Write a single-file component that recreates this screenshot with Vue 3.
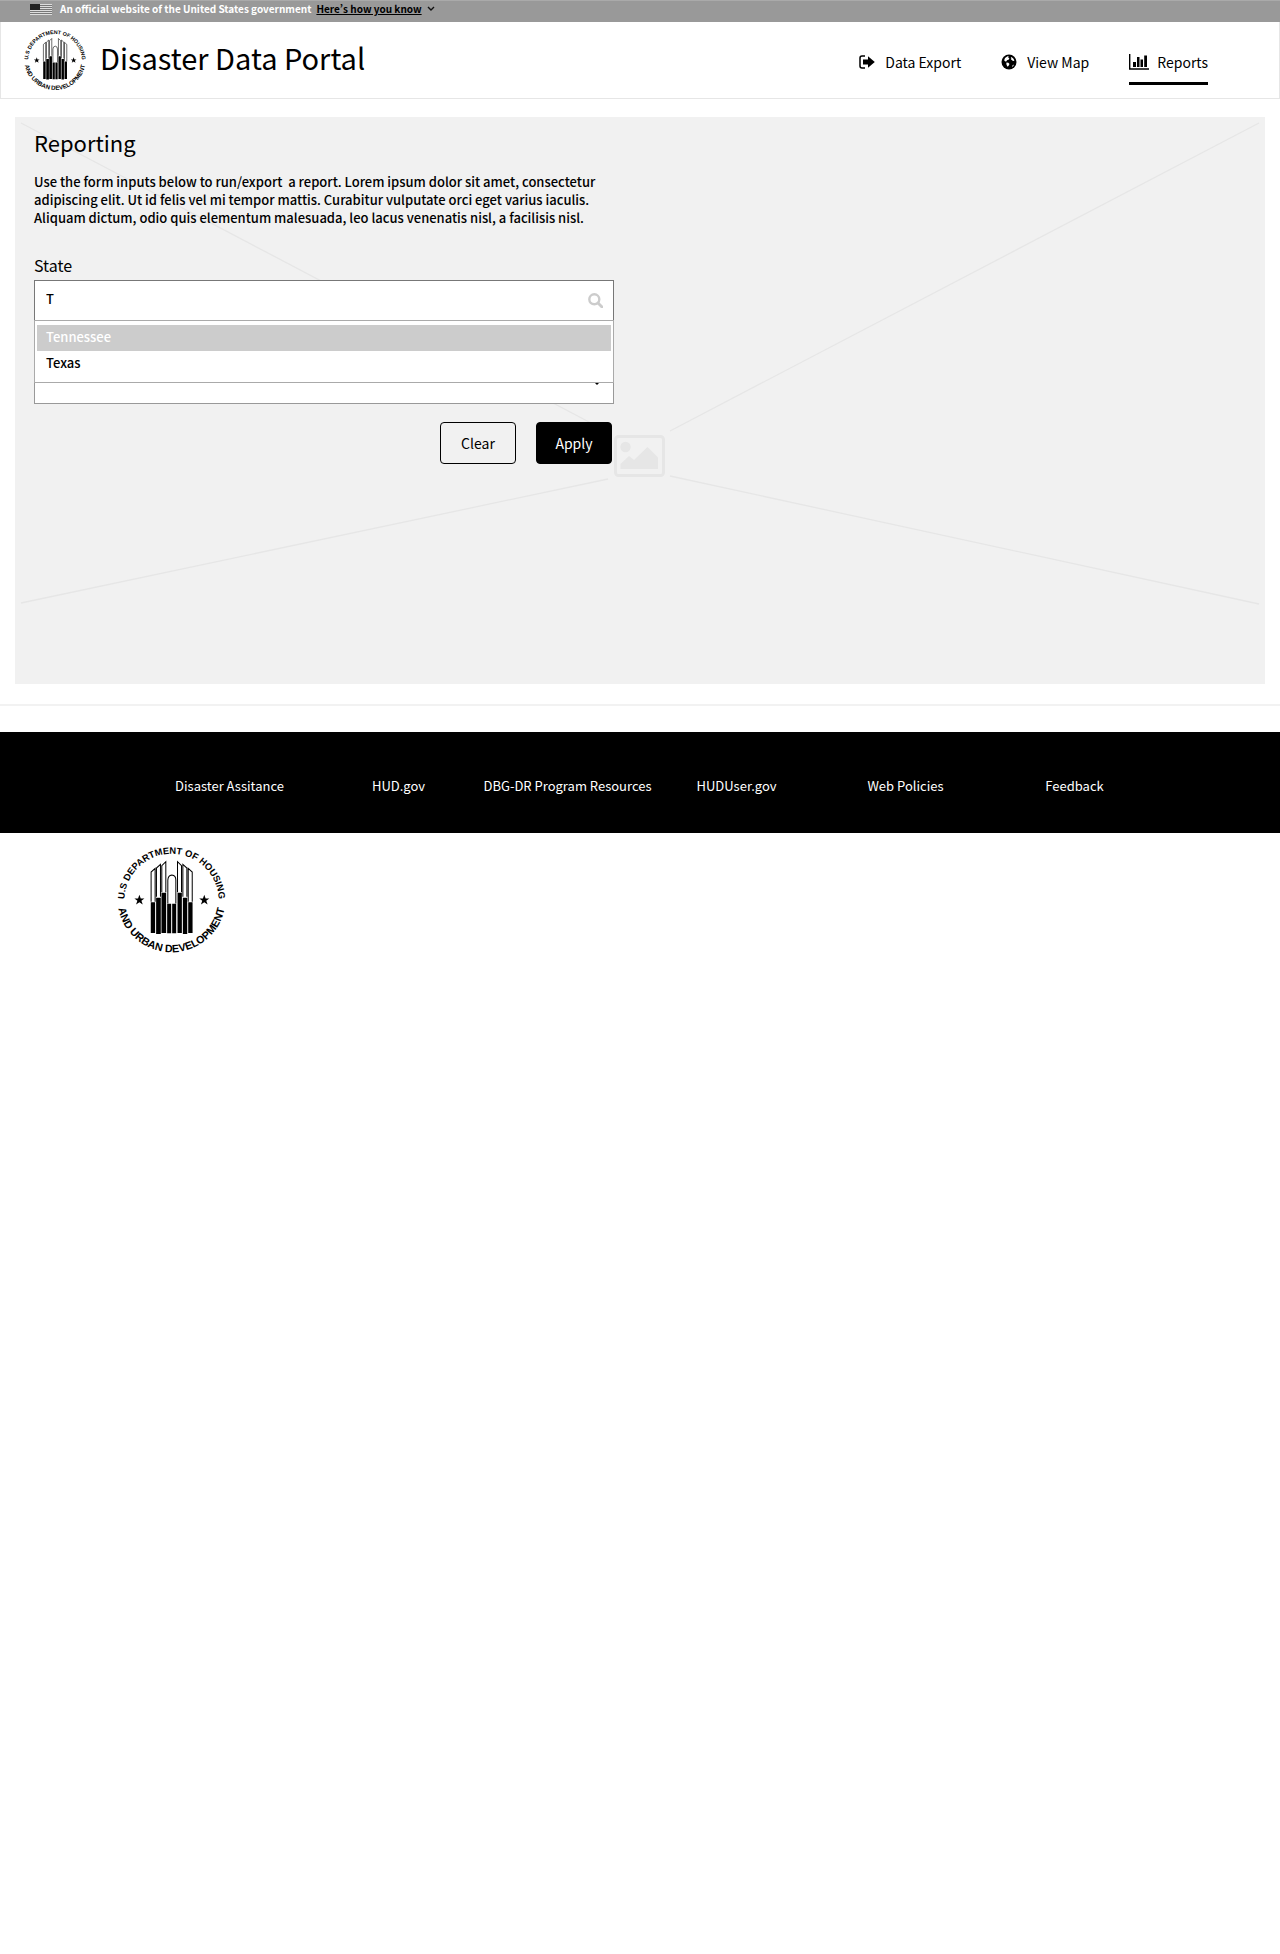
<script setup>
import { ref } from 'vue'

const query = ref('T')
const county = ref('')
const states = ['Tennessee', 'Texas']
const active = ref('Tennessee')
const footerLinks = [
  'Disaster Assitance',
  'HUD.gov',
  'DBG-DR Program Resources',
  'HUDUser.gov',
  'Web Policies',
  'Feedback',
]
</script>

<template>
  <div class="page">
    <svg class="defs" aria-hidden="true">
      <symbol id="seal" viewBox="23 17 326 326" overflow="visible">
        <path id="seal-top" d="M46 201A141 141 0 1 1 326 201" fill="none" />
        <path id="seal-bottom" d="M24 176A162 162 0 0 0 348 176" fill="none" />
        <text class="seal-text"><textPath href="#seal-top" startOffset="50%">U.S DEPARTMENT OF HOUSING</textPath></text>
        <text class="seal-text lower"><textPath href="#seal-bottom" startOffset="50%">AND URBAN DEVELOPMENT</textPath></text>
        <path
          d="M125 187V98L137 87V187M141 172V86L153 75V172M157 158V79L169 67V158M204 158V67L216 79V158M220 172V75L232 86V172M236 187V87L248 98V187M175 192V122Q176 108 187 107Q199 108 199 122V192"
          fill="#fff" stroke="#000" stroke-width="3"
        />
        <path d="M124 188h13v92h-13zM140 175h14v108h-14zM156 160h14v120h-14zM173 193h12v88h-12zM188 193h12v88h-12zM204 160h13v120h-13zM220 175h13v108h-13zM236 188h13v92h-13z" />
        <path id="seal-star" d="M90 166l4 11h11l-9 7 4 11-10-7-10 7 4-11-9-7h11z" />
        <use href="#seal-star" x="194" />
      </symbol>
    </svg>

    <div class="banner">
      <svg class="flag" viewBox="0 0 22 11" aria-hidden="true">
        <path d="M0 0h22v11H0z" fill="#777" />
        <path d="M0 0h22v1H0zM0 2h22v1H0zM0 4h22v1H0zM0 6h22v1H0zM0 8h22v1H0zM0 10h22v1H0z" fill="#ddd" />
        <path d="M0 0h10v6H0z" fill="#222" />
      </svg>
      <span>An official website of the United States government</span>
      <button class="know" type="button">
        <span class="know-text">Here’s how you know</span>
        <svg class="chevron" viewBox="0 0 8 6" aria-hidden="true"><path d="M1 1l3 3 3-3" fill="none" stroke="#111" stroke-width="1.4" /></svg>
      </button>
    </div>

    <header class="header">
      <svg class="seal-small" role="img" aria-label="HUD seal"><use href="#seal" /></svg>
      <h1>Disaster Data Portal</h1>
      <nav class="nav">
        <a href="#export">
          <svg class="icon export" viewBox="0 0 16 14" aria-hidden="true">
            <path d="M6 1H3Q1 1 1 3v8q0 2 2 2h3" fill="none" stroke="#000" stroke-width="1.5" />
            <path d="M4 4.5h5V1.2L15.8 7 9 12.8V9.5H4z" />
          </svg>
          <span>Data Export</span>
        </a>
        <a href="#map">
          <svg class="icon globe" viewBox="0 0 16 16" aria-hidden="true">
            <circle cx="8" cy="8" r="7.5" />
            <path d="M4 4L6.500 2.200l1.300.4-.6 1.200 1.200.5-.8 1.400-1.700.6-.3 1-1.400.2-1-1.200z" fill="#fff" />
            <path d="M5.500 8.600l1.800.2 1.200 1.300-.8 1.400-1 1.200-.8-1.200-.6-1.500z" fill="#fff" />
            <path d="M10.500 3l2 1.700.9 2-1.400.4-1.200-1-.7-.1.400-1.300-.8-.8z" fill="#fff" />
            <path d="M11 12.200l1.300-1.700.4.700-.9 1.500z" fill="#fff" />
          </svg>
          <span>View Map</span>
        </a>
        <a href="#reports" class="current" aria-current="page">
          <svg class="icon chart" viewBox="0 0 20 16" aria-hidden="true">
            <path d="M.7 0v15H20" fill="none" stroke="#000" stroke-width="1.4" />
            <path d="M4 8h3v5H4zM8 3h2.500v10H8zM11.500 5.500H14V13h-2.500zM15.200 1.500H18V13h-2.800z" />
          </svg>
          <span>Reports</span>
        </a>
      </nav>
    </header>

    <main class="main">
      <section class="panel">
        <svg class="rays" viewBox="0 0 1250 567" preserveAspectRatio="none" aria-hidden="true">
          <path d="M6 6L593 315M655 314L1244 6M6 486L593 362M655 359L1244 487" fill="none" stroke="#e6e6e6" stroke-width="1.300" />
        </svg>
        <svg class="picture" viewBox="0 0 51 42" aria-hidden="true">
          <rect x="1.500" y="1.500" width="48" height="39" rx="3" fill="none" stroke="#e6e6e6" stroke-width="3" />
          <circle cx="11.500" cy="12" r="5.200" fill="#e6e6e6" />
          <path d="M6.500 34v-5l8.500-8 5 4 13.500-13L44 22.500V34z" fill="#e6e6e6" />
        </svg>

        <form class="form" @submit.prevent>
          <h2>Reporting</h2>
          <p>Use the form inputs below to run/export&nbsp; a report. Lorem ipsum dolor sit amet, consectetur adipiscing elit. Ut id felis vel mi tempor mattis. Curabitur vulputate orci eget varius iaculis. Aliquam dictum, odio quis elementum malesuada, leo lacus venenatis nisl, a facilisis nisl.</p>
          <label for="state">State</label>
          <div class="combo">
            <input id="state" v-model="query" type="text" role="combobox" aria-expanded="true" aria-controls="state-list" autocomplete="off" />
            <svg class="search" viewBox="0 0 15 15" aria-hidden="true">
              <circle cx="6.300" cy="6.300" r="5" fill="none" stroke="#ccc" stroke-width="2.400" />
              <path d="M10 10l4 4" stroke="#ccc" stroke-width="2.800" stroke-linecap="round" />
            </svg>
            <ul id="state-list" class="options" role="listbox">
              <li v-for="s in states" :key="s" role="option" :aria-selected="s === active" :class="{ active: s === active }">{{ s }}</li>
            </ul>
          </div>
          <div class="select-wrap">
            <select v-model="county" aria-label="County"><option value=""></option></select>
            <svg class="caret" viewBox="0 0 10 6" aria-hidden="true"><path d="M0 0h10L5 5z" /></svg>
          </div>
          <div class="actions">
            <button class="btn" type="reset">Clear</button>
            <button class="btn primary" type="submit">Apply</button>
          </div>
        </form>
      </section>
    </main>

    <footer>
      <nav class="links" aria-label="Footer">
        <a v-for="l in footerLinks" :key="l" href="#">{{ l }}</a>
      </nav>
      <svg class="seal-large" role="img" aria-label="HUD seal"><use href="#seal" /></svg>
    </footer>
  </div>
</template>

<style>
body {
  margin: 0;
  background: #fff;
}
</style>

<style scoped>
.page {
  font-family: "Noto Sans CJK SC", "Noto Sans", sans-serif;
  font-size: 13px;
  font-weight: 500;
  line-height: 18px;
  color: #000;
}
.page *,
.page {
  box-sizing: border-box;
}
.defs {
  position: absolute;
  width: 0;
  height: 0;
}
.seal-text {
  font-family: "Liberation Sans", Arial, sans-serif;
  font-weight: 700;
  font-size: 28px;
  text-anchor: middle;
}
.lower {
  font-size: 32px;
}
.banner {
  display: flex;
  align-items: center;
  height: 22px;
  padding: 0 30px 5px;
  border-top: 1px solid #aaa;
  background: #999;
  color: #fff;
  font-size: 10px;
  font-weight: 700;
  line-height: 16px;
}
.flag {
  width: 22px;
  height: 11px;
  margin-right: 8px;
}
.know {
  display: flex;
  align-items: center;
  gap: 5px;
  margin-left: 5px;
  padding: 0;
  border: 0;
  background: none;
  color: #000;
  font: inherit;
}
.know-text {
  font-variant-east-asian: proportional-width;
  text-decoration: underline;
}
.chevron {
  width: 8px;
  height: 6px;
}
.header {
  display: flex;
  align-items: center;
  height: 77px;
  padding: 0 71px 0 23px;
  border: 1px solid #e6e6e6;
  border-top: 0;
}
.seal-small {
  width: 62px;
  height: 62px;
  overflow: visible;
}
h1 {
  margin: 0 auto 6px 14px;
  font-size: 29px;
  font-weight: 400;
  line-height: 40px;
}
.nav {
  display: flex;
  gap: 40px;
  padding-top: 12px;
  font-size: 14px;
  font-weight: 400;
}
.nav a {
  display: flex;
  align-items: center;
  height: 37px;
  padding-bottom: 6px;
  border-bottom: 3px solid transparent;
  color: #000;
  text-decoration: none;
}
.nav .current {
  border-color: #000;
}
.icon {
  height: 16px;
  margin-right: 10px;
}
.export {
  width: 16px;
  height: 14px;
}
.globe {
  width: 16px;
  margin-right: 10px;
}
.chart {
  width: 20px;
  margin-right: 8px;
}
.main {
  padding: 18px 15px 20px;
  border-bottom: 2px solid #f2f2f2;
}
.panel {
  position: relative;
  min-height: 567px;
  padding: 11px 19px;
  background: #f1f1f1;
}
.rays {
  position: absolute;
  inset: 0;
  width: 100%;
  height: 100%;
}
.picture {
  position: absolute;
  top: 318px;
  left: 50%;
  width: 51px;
  margin-left: -26px;
}
.form {
  position: relative;
  width: 580px;
}
h2 {
  margin: 0 0 17px;
  font-size: 22px;
  font-weight: 400;
  line-height: 28px;
}
p {
  margin: 0 0 28px;
}
label {
  display: block;
  margin-bottom: 5px;
  font-size: 16px;
  font-weight: 400;
  line-height: 20px;
}
.combo {
  position: relative;
}
input {
  display: block;
  width: 100%;
  height: 42px;
  padding: 0 40px 6px 11px;
  border: 1px solid #777;
  border-radius: 0;
  background: #fff;
  color: #000;
  font: inherit;
  outline: 0;
}
.search {
  position: absolute;
  top: 13px;
  right: 11px;
  width: 15px;
  height: 15px;
}
.options {
  position: absolute;
  z-index: 1;
  top: 40px;
  left: 0;
  width: 100%;
  height: 63px;
  margin: 0;
  padding: 4px 2px;
  border: 1px solid #aaa;
  background: #fff;
  list-style: none;
}
.options li {
  height: 26px;
  padding: 0 9px;
  line-height: 24px;
}
.options .active {
  background: #ccc;
  color: #fff;
}
.select-wrap {
  position: relative;
  margin-top: 40px;
}
select {
  display: block;
  width: 100%;
  height: 42px;
  border: 1px solid #999;
  border-radius: 0;
  background: #fff;
  appearance: none;
}
.caret {
  position: absolute;
  top: 18px;
  right: 12px;
  width: 10px;
  height: 6px;
}
.actions {
  display: flex;
  justify-content: flex-end;
  gap: 20px;
  margin-top: 18px;
  padding-right: 2px;
}
.btn {
  width: 76px;
  height: 42px;
  padding: 0;
  border: 1px solid #000;
  border-radius: 4px;
  background: transparent;
  color: #000;
  font: inherit;
  font-size: 14px;
  font-weight: 400;
}
.primary {
  background: #000;
  color: #fff;
}
.links {
  display: grid;
  grid-template-columns: repeat(6, 1fr);
  margin-top: 26px;
  padding: 45px 121px 38px 145px;
  background: #000;
  font-size: 13px;
  font-weight: 400;
  text-align: center;
}
.links a {
  color: #fff;
  text-decoration: none;
  white-space: nowrap;
}
.seal-large {
  display: block;
  width: 109px;
  height: 109px;
  margin: 12px 0 0 117px;
  overflow: visible;
}
</style>
